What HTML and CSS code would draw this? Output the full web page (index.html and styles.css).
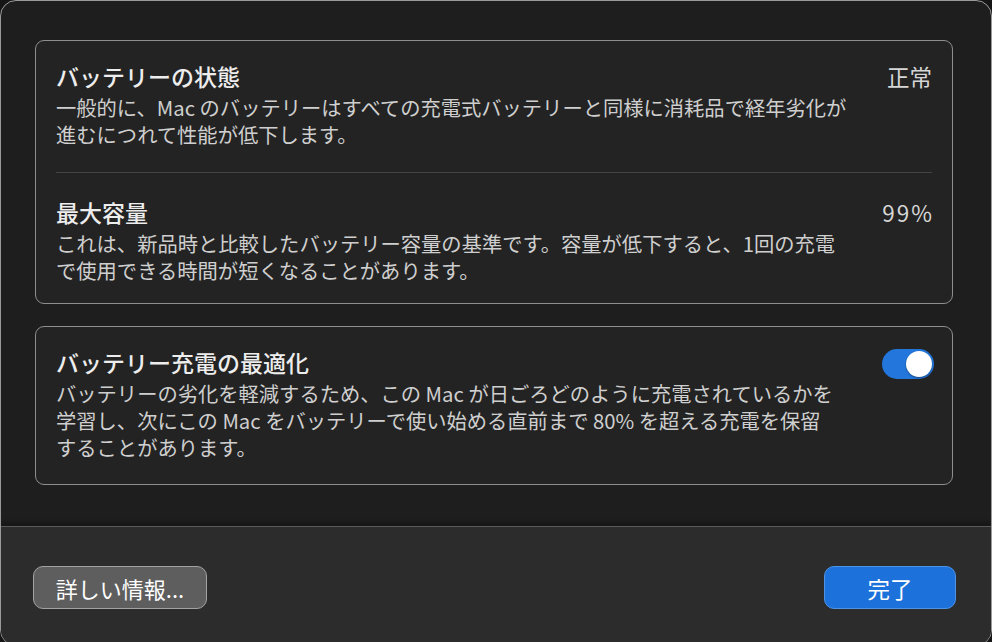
FILE: index.html
```html
<!DOCTYPE html>
<html lang="ja">
<head>
    <meta charset="UTF-8">
    <meta name="viewport" content="width=device-width, initial-scale=1.0">
    <title>バッテリーの状態</title>
    <link rel="stylesheet" href="styles.css">
</head>
<body>
    <div class="window">
        <div class="content">
            <!-- 状態と容量 -->
            <section class="card">
                <div class="row">
                    <div class="text">
                        <h2>バッテリーの状態</h2>
                        <p>一般的に、Mac のバッテリーはすべての充電式バッテリーと同様に消耗品で経年劣化が<br>進むにつれて性能が低下します。</p>
                    </div>
                    <div class="value">正常</div>
                </div>
                <div class="row">
                    <div class="text">
                        <h2>最大容量</h2>
                        <p>これは、新品時と比較したバッテリー容量の基準です。容量が低下すると、1回の充電<br>で使用できる時間が短くなることがあります。</p>
                    </div>
                    <div class="value num">99%</div>
                </div>
            </section>

            <!-- 充電の最適化 -->
            <section class="card">
                <div class="row">
                    <div class="text">
                        <h2>バッテリー充電の最適化</h2>
                        <p>バッテリーの劣化を軽減するため、この Mac が日ごろどのように充電されているかを<br>学習し、次にこの Mac をバッテリーで使い始める直前まで 80% を超える充電を保留<br>することがあります。</p>
                    </div>
                    <div class="toggle on"><span class="knob"></span></div>
                </div>
            </section>
        </div>

        <footer>
            <button class="btn">詳しい情報...</button>
            <button class="btn primary">完了</button>
        </footer>
    </div>
</body>
</html>
```

FILE: styles.css
```css
body {
    margin: 0;
    height: 642px;
    overflow: hidden;
    background-color: #151515;
    font-family: "Noto Sans CJK JP", "Liberation Sans", sans-serif;
}
.window {
    height: 646px;
    box-sizing: border-box;
    border: 1px solid #9a9a9a;
    border-radius: 16px;
    background-color: #1e1e1e;
    display: flex;
    flex-direction: column;
    overflow: hidden;
}
.content {
    padding: 39px 38px 0 34px;
    display: flex;
    flex-direction: column;
    gap: 22px;
    flex: 1;
}
.card {
    border: 1px solid #8e8e8e;
    border-radius: 9px;
    background-color: #232323;
    padding: 0 20px;
}
.row {
    display: flex;
    justify-content: space-between;
    align-items: flex-start;
    padding: 20px 0 23px;
}
.row + .row {
    border-top: 1px solid #444;
    padding-top: 24px;
    padding-bottom: 19px;
}
.card:first-child .row:first-child {
    padding-bottom: 24px;
}
h2 {
    margin: 0;
    font-size: 23px;
    line-height: 30px;
    font-weight: 500;
    color: #ededed;
}
p {
    margin: 3px 0 0;
    font-size: 20.3px;
    line-height: 27px;
    color: #cfcfcf;
}
.value {
    font-size: 22.5px;
    line-height: 30px;
    color: #d6d6d6;
}
.value.num {
    letter-spacing: 2px;
    margin-right: -2px;
}
.toggle {
    margin-top: 2px;
    margin-right: -2px;
    width: 52px;
    height: 30px;
    box-sizing: border-box;
    border-radius: 15px;
    background-color: #2377dc;
    padding: 2px;
    display: flex;
    justify-content: flex-end;
}
.knob {
    width: 26px;
    height: 26px;
    border-radius: 50%;
    background-color: #fff;
    box-shadow: 0 1px 2px rgba(0, 0, 0, 0.4);
}
footer {
    height: 119px;
    box-sizing: border-box;
    background-color: #2c2c2c;
    border-top: 1px solid #5a5a5a;
    box-shadow: 0 -4px 4px rgba(0, 0, 0, 0.25);
    display: flex;
    justify-content: space-between;
    align-items: flex-start;
    padding: 39px 35px 0 32px;
}
.btn {
    width: 174px;
    height: 43px;
    padding: 0;
    font-family: inherit;
    font-size: 22px;
    color: #fff;
    background-color: #5e5e5e;
    border: 1.5px solid #a3a3a3;
    border-radius: 10px;
}
.btn.primary {
    width: 132px;
    background-color: #1c71da;
    border-color: #4d93e6;
    font-size: 22.5px;
}
```
